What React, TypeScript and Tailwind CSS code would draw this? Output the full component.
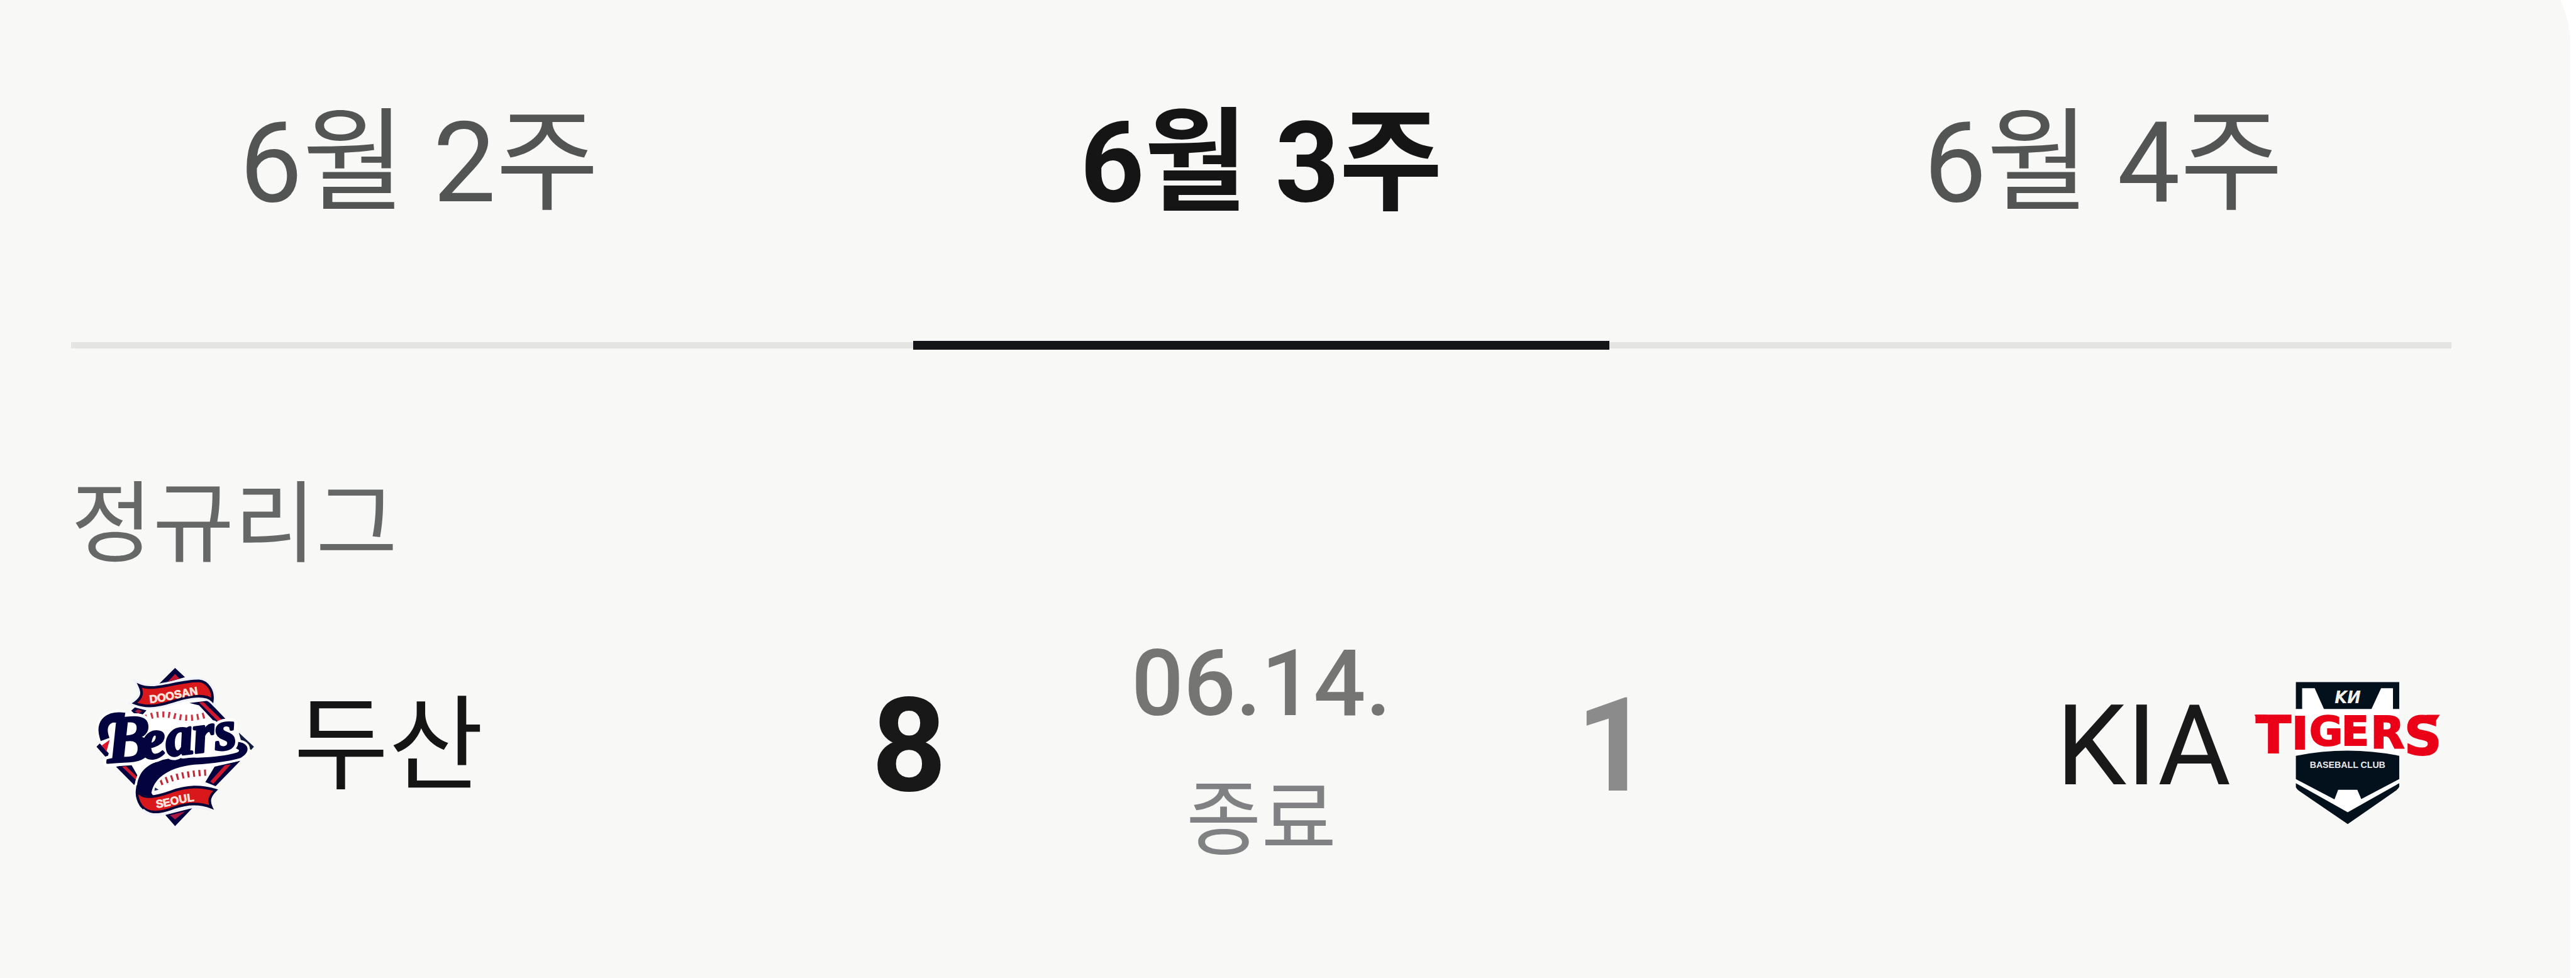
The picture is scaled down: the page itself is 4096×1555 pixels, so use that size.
// /screens/WeeklySchedule.tsx
import { useState } from 'react';

const weeks = ['6월 2주', '6월 3주', '6월 4주'];

const BearsLogo = () => (
  <svg viewBox="0 0 1110 1110" className="w-[292px] h-[292px] shrink-0" role="img" aria-label="Doosan Bears">
    <defs>
      <path id="bannerTop" d="M392 296 C480 290 560 262 700 242" />
      <path id="bannerBottom" d="M432 930 C500 926 560 896 690 886" />
    </defs>

    {/* Diamond */}
    <path d="M545 84 L1020 562 L545 1040 L70 562 Z" fill="#fff" />
    <path d="M545 84 L605 140 L442 186 Z" fill="#03033f" />
    <path d="M545 120 L572 148 L500 168 Z" fill="#c01830" />
    <path d="M632 296 L770 278 L770 308 L860 402 L812 440 L690 310 Z" fill="#03033f" />
    <path d="M690 292 L716 290 L832 402 L812 414 Z" fill="#d0182c" />
    <path d="M280 342 L302 322 L372 340 L328 388 Z" fill="#03033f" />
    <path d="M302 346 L320 334 L346 344 L324 362 Z" fill="#a01838" />
    <path d="M930 474 L1022 560 L1004 580 L946 530 Z" fill="#101c40" />
    <path d="M70 560 L90 540 L144 600 L134 632 Z" fill="#03033f" />
    <path d="M102 552 L150 518 L130 590 Z" fill="#e0142c" />
    <path d="M188 680 L278 664 L322 740 L298 792 Z" fill="#03033f" />
    <path d="M224 680 L248 678 L318 744 L306 758 Z" fill="#d0182c" />
    <path d="M784 680 L940 644 L790 798 L728 774 Z" fill="#03033f" />
    <path d="M846 672 L882 666 L776 784 L758 770 Z" fill="#d0182c" />
    <path d="M486 972 L650 930 L545 1040 Z" fill="#03033f" />
    <path d="M514 974 L606 950 L545 1000 Z" fill="#a81840" />

    {/* Ball */}
    <circle cx="545" cy="562" r="262" fill="#fff" />
    <path d="M366 386 Q450 350 540 374 T724 370" fill="none" stroke="#cc3340" strokeWidth="36" strokeDasharray="12 23" />
    <path d="M456 776 Q540 742 610 730 T744 716" fill="none" stroke="#c02838" strokeWidth="38" strokeDasharray="12 22" />

    {/* Swoosh */}
    <path
      d="M915 530 C990 530 1010 590 940 628 C870 650 740 664 660 668 C540 680 420 730 402 840 L430 880 L350 880 C300 850 306 760 350 706 C430 620 560 624 680 626 C780 624 860 612 916 596 C946 584 930 574 900 566 Z"
      fill="#03033f"
      stroke="#fff"
      strokeWidth="28"
      paintOrder="stroke"
    />
    <path d="M420 826 L424 806 L446 820 Z" fill="#22305a" />

    {/* Ribbons */}
    <path
      d="M330 190 C420 230 560 160 690 162 C740 166 778 220 770 280 C740 250 680 248 600 266 C500 290 410 340 300 296 C350 262 350 232 330 190 Z"
      fill="none"
      stroke="#f0f2fb"
      strokeWidth="40"
    />
    <path
      d="M330 190 C420 230 560 160 690 162 C740 166 778 220 770 280 C740 250 680 248 600 266 C500 290 410 340 300 296 C350 262 350 232 330 190 Z"
      fill="#d9181c"
      stroke="#07073a"
      strokeWidth="16"
    />
    <path
      d="M316 820 C340 880 420 868 520 832 C620 796 700 796 790 822 C756 856 744 884 764 926 C700 900 620 900 540 928 C460 960 380 970 340 916 C316 880 312 850 316 820 Z"
      fill="#d9181c"
      stroke="#07073a"
      strokeWidth="16"
    />
    <path d="M350 940 C400 985 470 975 545 946 C620 918 700 920 762 944" fill="none" stroke="#f0f2fb" strokeWidth="14" />
    <g fill="#fde3dc" stroke="#fde3dc" strokeWidth="3" fontFamily="'Liberation Sans', sans-serif" fontWeight="700">
      <text fontSize="68"><textPath href="#bannerTop">DOOSAN</textPath></text>
      <text fontSize="68"><textPath href="#bannerBottom">SEOUL</textPath></text>
    </g>

    {/* Script name */}
    <path d="M122 516 C80 400 160 370 240 382" fill="none" stroke="#fff" strokeWidth="86" />
    <g fontFamily="'Liberation Serif', serif" fontWeight="700" fontStyle="italic" strokeLinejoin="round">
      <g fill="#fff" stroke="#fff" strokeWidth="50">
        <text x="140" y="656" fontSize="400" transform="rotate(-4 140 656)">B</text>
        <text x="350" y="636" fontSize="336" transform="rotate(-7 350 636)">ears</text>
      </g>
      <path d="M122 516 C80 400 160 370 240 382" fill="none" stroke="#03033f" strokeWidth="56" />
      <g fill="#03033f" stroke="#03033f" strokeWidth="14">
        <text x="140" y="656" fontSize="400" transform="rotate(-4 140 656)">B</text>
        <text x="350" y="636" fontSize="336" transform="rotate(-7 350 636)">ears</text>
      </g>
    </g>
  </svg>
);

const TigersLogo = () => (
  <svg viewBox="0 -61 1260 1051" className="w-[331px] h-[276px] shrink-0" role="img" aria-label="KIA Tigers">
    <path d="M318 78 H944 V690 L632 938 L318 690 Z" fill="#fff" />
    <path d="M318 78 H944 V241 H906 V115 H834 L776 241 H488 L432 115 H356 V241 H318 Z" fill="#03111d" />
    <path d="M318 524 Q631 462 944 524 V665 L714 786 L690 730 H574 L552 788 L318 665 Z" fill="#03111d" />
    <path d="M318 690 L632 866 L944 690 V712 Q938 724 920 738 L632 938 L342 740 Q322 726 318 714 Z" fill="#03111d" />
    <g fontWeight="700" textAnchor="middle">
      <text x="632" y="206" fontSize="98" fontStyle="italic" fill="#f3f3ee" fontFamily="'DejaVu Sans', sans-serif">KИ</text>
      <text x="631" y="597" fontSize="54" fill="#e9e9ec" fontFamily="'Liberation Sans', sans-serif">BASEBALL CLUB</text>
    </g>
    <path d="M66 276 H140 V326 H104 Z M1190 276 H1110 V326 H1156 Z" fill="#ea0117" />
    <g fill="#ea0117" stroke="#ea0117" strokeWidth="8" fontFamily="'DejaVu Sans', sans-serif" fontWeight="700">
      <text x="76" y="508" fontSize="312">T</text>
      <text x="292" y="482" fontSize="274">I</text>
      <text x="400" y="462" fontSize="246">G</text>
      <text x="594" y="460" fontSize="244">E</text>
      <text x="770" y="478" fontSize="268">R</text>
      <text x="974" y="518" fontSize="316">S</text>
    </g>
  </svg>
);

const WeeklySchedule = () => {
  const [activeWeek, setActiveWeek] = useState(1);

  return (
    <div className="min-h-screen overflow-hidden bg-white font-[Roboto,'Noto_Sans_CJK_KR',sans-serif]">
      {/* Card, its top edge runs past the window */}
      <div className="-mt-[90px] mr-[9px] min-h-[calc(100vh+90px)] rounded-tr-[160px] bg-[#f8f8f6] pt-[90px] pl-[113px] pr-[189px]">
        {/* Week tabs */}
        <div role="tablist" className="grid grid-cols-3 gap-[232px] border-b-[10px] border-[#e4e5e3]">
          {weeks.map((week, i) => (
            <button
              key={week}
              type="button"
              role="tab"
              aria-selected={i === activeWeek}
              onClick={() => setActiveWeek(i)}
              className={`relative pt-[129px] pb-[155px] text-[178px] leading-[260px] whitespace-nowrap ${
                i === activeWeek ? 'font-bold text-[#151515]' : 'text-[#535454]'
              }`}
            >
              {week}
              {i === activeWeek && (
                <span className="absolute inset-x-0 -bottom-[12px] h-[14px] bg-[#141517]" />
              )}
            </button>
          ))}
        </div>

        <h2 className="pt-[180px] text-[141px] leading-[200px] text-[#666767]">정규리그</h2>

        {/* Match */}
        <div className="grid grid-cols-[1fr_220px_900px_220px_1fr] items-center pt-[34px]">
          <div className="flex items-center gap-10 pl-[22px]">
            <BearsLogo />
            <span className="text-[164px] leading-[250px] text-[#151515]">두산</span>
          </div>
          <strong className="text-center text-[208px] leading-[240px] font-bold text-[#181818]">8</strong>
          <div className="flex flex-col items-center gap-4 pt-5">
            <time className="text-[146px] leading-[200px] font-medium text-[#757574]">06.14.</time>
            <span className="text-[130px] leading-[200px] text-[#808183]">종료</span>
          </div>
          <strong className="text-center text-[208px] leading-[240px] font-bold text-[#8b8b8b]">1</strong>
          <div className="flex items-center justify-end gap-5">
            <span className="text-[178px] leading-[240px] text-[#191919]">KIA</span>
            <TigersLogo />
          </div>
        </div>
      </div>
    </div>
  );
};

export default WeeklySchedule;
